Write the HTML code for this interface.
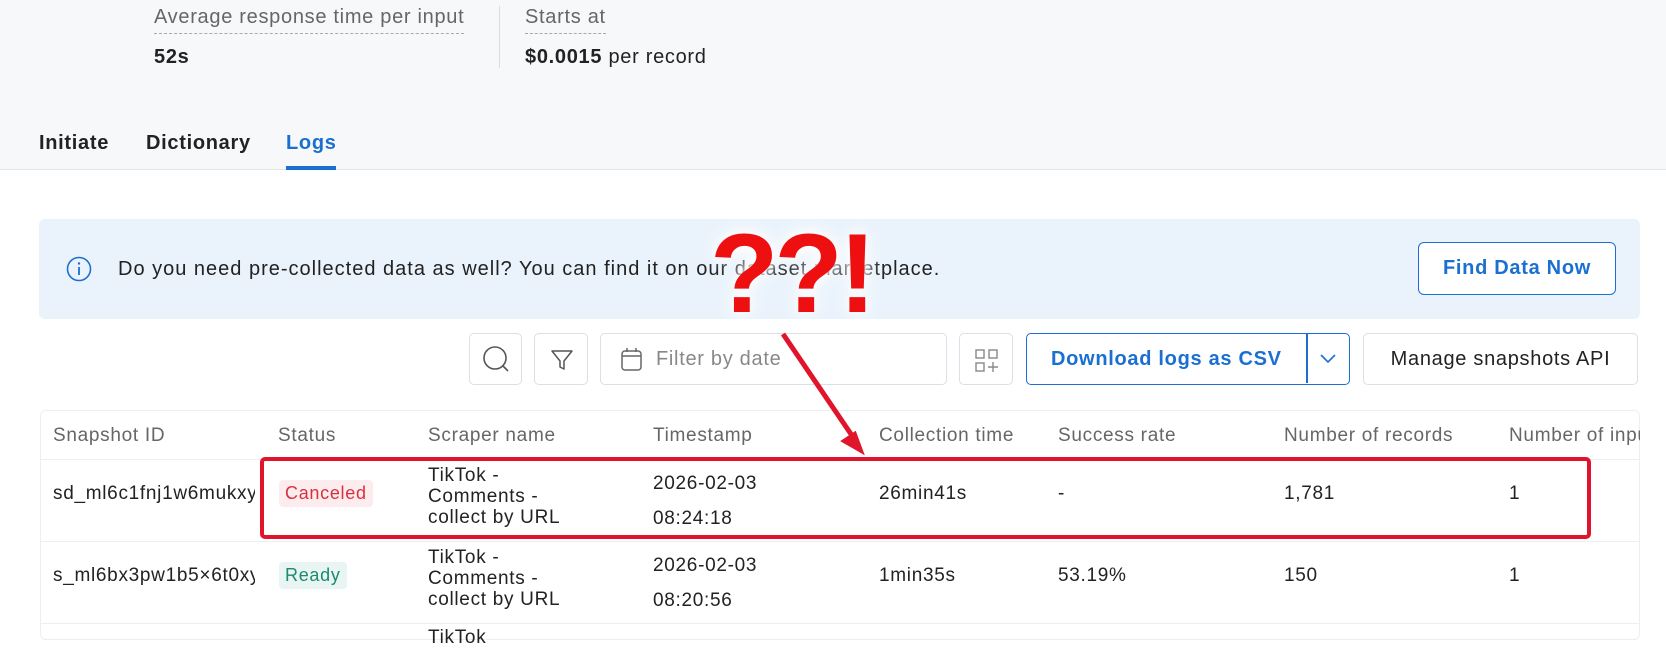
<!DOCTYPE html>
<html><head><meta charset="utf-8"><style>
*{box-sizing:border-box;margin:0;padding:0}
body{width:1666px;height:634px;overflow:hidden;background:#fff;font-family:"Liberation Sans",sans-serif;color:#222;position:relative;letter-spacing:0.7px}
.a{position:absolute;white-space:nowrap}
.top{position:absolute;left:0;top:0;width:1666px;height:170px;background:#f7f8fa;border-bottom:1px solid #e3e5e8}
.lbl{color:#666;font-size:20px;border-bottom:1px dashed #aaa;padding-bottom:4px}
.btn{position:absolute;border:1px solid #dcdfe3;border-radius:5px;background:#fff}
.hd{color:#666;font-size:19px}
.td{font-size:19px;color:#222}
</style></head><body>
<div class="top"></div>
<div class="a lbl" style="left:154px;top:6px">Average response time per input</div>
<div class="a" style="left:154px;top:46px;font-size:20px;font-weight:bold">52s</div>
<div class="a" style="left:499px;top:6px;width:1px;height:62px;background:#ddd"></div>
<div class="a lbl" style="left:525px;top:6px">Starts at</div>
<div class="a" style="left:525px;top:46px;font-size:20px"><b>$0.0015</b> per record</div>
<div class="a" style="left:39px;top:132px;font-size:20px;font-weight:bold;color:#222">Initiate</div>
<div class="a" style="left:146px;top:132px;font-size:20px;font-weight:bold;color:#222">Dictionary</div>
<div class="a" style="left:286px;top:132px;font-size:20px;font-weight:bold;color:#1a6fd1">Logs</div>
<div class="a" style="left:286px;top:166px;width:50px;height:4px;background:#1a6fd1"></div>

<div class="a" style="left:39px;top:219px;width:1601px;height:100px;background:#eaf3fc;border-radius:6px"></div>
<svg class="a" style="left:66px;top:256px" width="26" height="26" viewBox="0 0 26 26"><circle cx="13" cy="13" r="11.5" fill="none" stroke="#1a6fd1" stroke-width="1.6"/><line x1="13" y1="11" x2="13" y2="19" stroke="#1a6fd1" stroke-width="1.8"/><circle cx="13" cy="7.5" r="1.2" fill="#1a6fd1"/></svg>
<div class="a" style="left:118px;top:258px;font-size:20px;letter-spacing:1px;color:#222">Do you need pre-collected data as well? You can find it on our dataset marketplace.</div>
<div class="a" style="left:1418px;top:242px;width:198px;height:53px;border:1.5px solid #1a6fd1;border-radius:6px;background:#fff;color:#1a6fd1;font-weight:bold;font-size:20px;text-align:center;line-height:50px">Find Data Now</div>

<div class="btn" style="left:469px;top:333px;width:53px;height:52px"><svg width="53" height="52"><circle cx="25" cy="24" r="11" fill="none" stroke="#555" stroke-width="1.6"/><line x1="33" y1="32" x2="38" y2="37" stroke="#555" stroke-width="1.6"/></svg></div>
<div class="btn" style="left:534px;top:333px;width:54px;height:52px"><svg width="54" height="52"><path d="M17 17h20l-8 10v8l-4-2v-6z" fill="none" stroke="#555" stroke-width="1.5" stroke-linejoin="round"/></svg></div>
<div class="btn" style="left:600px;top:333px;width:347px;height:52px"><svg class="a" style="left:19px;top:13px" width="24" height="26"><rect x="2" y="4" width="19" height="19" rx="3" fill="none" stroke="#666" stroke-width="1.5"/><line x1="2" y1="9" x2="21" y2="9" stroke="#666" stroke-width="1.5"/><line x1="7" y1="1" x2="7" y2="5" stroke="#666" stroke-width="1.5"/><line x1="16" y1="1" x2="16" y2="5" stroke="#666" stroke-width="1.5"/></svg><span class="a" style="left:55px;top:14px;font-size:20px;color:#888">Filter by date</span></div>
<div class="btn" style="left:959px;top:333px;width:54px;height:52px"><svg width="54" height="52"><rect x="16" y="16" width="8" height="8" fill="none" stroke="#888" stroke-width="1.4"/><rect x="29" y="16" width="8" height="8" fill="none" stroke="#888" stroke-width="1.4"/><rect x="16" y="29" width="8" height="8" fill="none" stroke="#888" stroke-width="1.4"/><path d="M33 28v10M28 33h10" stroke="#888" stroke-width="1.4"/></svg></div>
<div class="a" style="left:1026px;top:333px;width:324px;height:52px;border:1.5px solid #1a6fd1;border-radius:5px;background:#fff"><span class="a" style="left:24px;top:14px;font-size:20px;font-weight:bold;color:#1a6fd1">Download logs as CSV</span><div class="a" style="left:279px;top:0;width:1.5px;height:49px;background:#1a6fd1"></div><svg class="a" style="left:290px;top:18px" width="22" height="14"><path d="M4 3l7 7 7-7" fill="none" stroke="#1a6fd1" stroke-width="1.6"/></svg></div>
<div class="btn" style="left:1363px;top:333px;width:275px;height:52px;text-align:center;line-height:51px;font-size:20px;color:#222">Manage snapshots API</div>

<div class="a" style="left:40px;top:410px;width:1600px;height:230px;border:1px solid #eceef0;border-radius:6px"></div>
<div class="a" style="left:40px;top:459px;width:1600px;height:1px;background:#eceef0"></div>
<div class="a" style="left:40px;top:541px;width:1600px;height:1px;background:#eceef0"></div>
<div class="a" style="left:40px;top:623px;width:1600px;height:1px;background:#eceef0"></div>

<div class="a hd" style="left:53px;top:425px">Snapshot ID</div>
<div class="a hd" style="left:278px;top:425px">Status</div>
<div class="a hd" style="left:428px;top:425px">Scraper name</div>
<div class="a hd" style="left:653px;top:425px">Timestamp</div>
<div class="a hd" style="left:879px;top:425px">Collection time</div>
<div class="a hd" style="left:1058px;top:425px">Success rate</div>
<div class="a hd" style="left:1284px;top:425px">Number of records</div>
<div class="a hd" style="left:1509px;top:425px;width:131px;overflow:hidden">Number of inputs</div>

<div class="a td" style="left:53px;top:483px;width:202px;overflow:hidden">sd_ml6c1fnj1w6mukxyz</div>
<div class="a" style="left:279px;top:480px;padding:3px 6px;background:#fdecee;color:#d9303e;font-size:18px;border-radius:4px">Canceled</div>
<div class="a td" style="left:428px;top:465px;line-height:21px">TikTok -<br>Comments -<br>collect by URL</div>
<div class="a td" style="left:653px;top:466px;line-height:35px">2026-02-03<br>08:24:18</div>
<div class="a td" style="left:879px;top:483px">26min41s</div>
<div class="a td" style="left:1058px;top:483px">-</div>
<div class="a td" style="left:1284px;top:483px">1,781</div>
<div class="a td" style="left:1509px;top:483px">1</div>

<div class="a td" style="left:53px;top:565px;width:202px;overflow:hidden">s_ml6bx3pw1b5×6t0xyz</div>
<div class="a" style="left:279px;top:562px;padding:3px 6px;background:#e8f5f3;color:#1c8a6e;font-size:18px;border-radius:4px">Ready</div>
<div class="a td" style="left:428px;top:547px;line-height:21px">TikTok -<br>Comments -<br>collect by URL</div>
<div class="a td" style="left:653px;top:548px;line-height:35px">2026-02-03<br>08:20:56</div>
<div class="a td" style="left:879px;top:565px">1min35s</div>
<div class="a td" style="left:1058px;top:565px">53.19%</div>
<div class="a td" style="left:1284px;top:565px">150</div>
<div class="a td" style="left:1509px;top:565px">1</div>
<div class="a td" style="left:428px;top:627px">TikTok</div>

<div class="a" style="left:260px;top:457px;width:1331px;height:82px;border:4px solid #e0142a;border-radius:5px"></div>
<svg class="a" style="left:0;top:0" width="1666" height="634"><line x1="783" y1="334" x2="855" y2="440" stroke="#e0142a" stroke-width="5"/><path d="M862 452l-19-11 12-8z" fill="#e0142a" stroke="#e0142a" stroke-width="3"/></svg>
<div class="a" style="left:710px;top:214px;font-size:112px;line-height:120px;font-weight:bold;color:#ee1010;font-family:'Liberation Sans',sans-serif;letter-spacing:-4px;text-shadow:0 0 12px #fff,0 0 20px #fff">??!</div>
</body></html>
